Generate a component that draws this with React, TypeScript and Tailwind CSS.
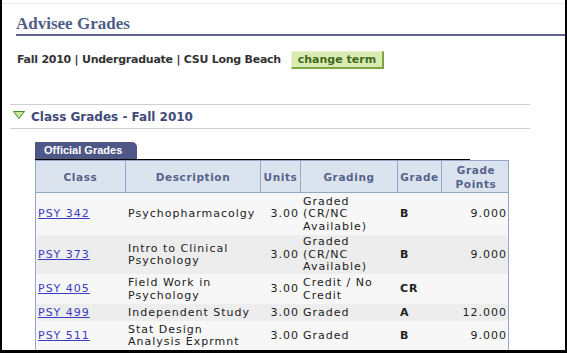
type GradeRow = {
  cls: string
  desc: string[]
  units: string
  grading: string[]
  grade: string
  points: string
  h: string
  bg: string
}

const rows: GradeRow[] = [
  { cls: "PSY 342", desc: ["Psychopharmacolgy"], units: "3.00", grading: ["Graded", "(CR/NC", "Available)"], grade: "B", points: "9.000", h: "h-[42px]", bg: "bg-[#f7f7f7]" },
  { cls: "PSY 373", desc: ["Intro to Clinical", "Psychology"], units: "3.00", grading: ["Graded", "(CR/NC", "Available)"], grade: "B", points: "9.000", h: "h-[39px]", bg: "bg-[#ededed]" },
  { cls: "PSY 405", desc: ["Field Work in", "Psychology"], units: "3.00", grading: ["Credit / No", "Credit"], grade: "CR", points: "", h: "h-[30px]", bg: "bg-[#f7f7f7]" },
  { cls: "PSY 499", desc: ["Independent Study"], units: "3.00", grading: ["Graded"], grade: "A", points: "12.000", h: "h-[17px]", bg: "bg-[#ededed]" },
  { cls: "PSY 511", desc: ["Stat Design", "Analysis Exprmnt"], units: "3.00", grading: ["Graded"], grade: "B", points: "9.000", h: "h-[29px]", bg: "bg-[#f7f7f7]" },
]

const cols = "grid grid-cols-[90px_135px_40px_97px_44px_68px]"
const cell = "flex flex-col justify-center px-[2px] pt-px leading-[12.5px]"

export default function App() {
  return (
    <div className="w-[567px] h-[358px] bg-white overflow-hidden font-['DejaVu_Sans',sans-serif]">
      <div className="w-[567px] h-[353px] border-x-2 border-b-[3px] border-black overflow-hidden">
        <div className="mt-[3px] h-px bg-[#ececec]" />

        {/* page title */}
        <div className="ml-[14px] h-[32px] flex items-end border-b-2 border-[#5b6590]">
          <h1 className="font-['Liberation_Serif',serif] font-bold text-[17px] leading-[20px] text-[#4f5d89]">Advisee Grades</h1>
        </div>

        <div className="mt-[15px] ml-[15px] flex items-center h-[18px] gap-[10px]">
          <span className="text-[11px] font-bold text-[#333333] tracking-[-0.25px]">Fall 2010 | Undergraduate | CSU Long Beach</span>
          <button className="w-[93px] h-[18px] bg-[#d9eab3] border-t border-l border-[#e8f2cd] border-r-2 border-b-2 border-r-[#7ea53f] border-b-[#7ea53f] text-[11px] font-bold text-[#3f6a1c] leading-none">
            change term
          </button>
        </div>

        {/* section header */}
        <div className="mt-[35px] ml-[8px] w-[520px] border-t border-[#cfcfcf]">
          <div className="h-[24px] flex items-center gap-[6px] pl-[3px] border-b border-[#cfcfcf]">
            <svg width="12" height="8" viewBox="0 0 12 8" className="mt-[-3px]">
              <polygon points="0.5,0.5 11.5,0.5 6,7.5" fill="#c8e6a0" stroke="#3f8a2a" strokeWidth="1" />
            </svg>
            <span className="text-[12px] font-bold text-[#3f4a7a]">Class Grades - Fall 2010</span>
          </div>
        </div>

        {/* tab */}
        <div className="mt-[13px] ml-[33px] w-[435px] border-b border-black flex">
          <div className="w-[102px] h-[17px] bg-[#4d5886] rounded-tr-[5px] rounded-tl-[1px] flex items-center pl-[9px]">
            <span className="font-['Liberation_Sans',sans-serif] font-bold text-[11px] text-white leading-none">Official Grades</span>
          </div>
        </div>

        {/* table */}
        <div className="ml-[33px] w-[474px] border-l border-r border-[#94a8c6]">
          <div className={`${cols} h-[33px] bg-[#dbe3ee] border-t border-b border-[#94a8c6] text-[10.5px] font-bold text-[#55648c] tracking-[0.6px] leading-[14px]`}>
            <div className="flex items-center justify-center border-r border-[#94a8c6]">Class</div>
            <div className="flex items-center justify-center border-r border-[#94a8c6]">Description</div>
            <div className="flex items-center justify-center border-r border-[#94a8c6]">Units</div>
            <div className="flex items-center justify-center border-r border-[#94a8c6]">Grading</div>
            <div className="flex items-center justify-center border-r border-[#94a8c6]">Grade</div>
            <div className="flex flex-col items-center justify-center">
              <span>Grade</span>
              <span>Points</span>
            </div>
          </div>

          {rows.map((r) => (
            <div key={r.cls} className={`${cols} ${r.h} ${r.bg} text-[11px] text-[#222222] tracking-[1px]`}>
              <div className={cell}>
                <a href="#" className="text-[#3b3bbf] underline">{r.cls}</a>
              </div>
              <div className={cell}>
                {r.desc.map((d) => <span key={d}>{d}</span>)}
              </div>
              <div className={`${cell} items-end`}>{r.units}</div>
              <div className={cell}>
                {r.grading.map((g) => <span key={g}>{g}</span>)}
              </div>
              <div className={`${cell} font-bold`}>{r.grade}</div>
              <div className={`${cell} items-end pr-[3px]`}>{r.points}</div>
            </div>
          ))}
        </div>
      </div>
    </div>
  )
}
